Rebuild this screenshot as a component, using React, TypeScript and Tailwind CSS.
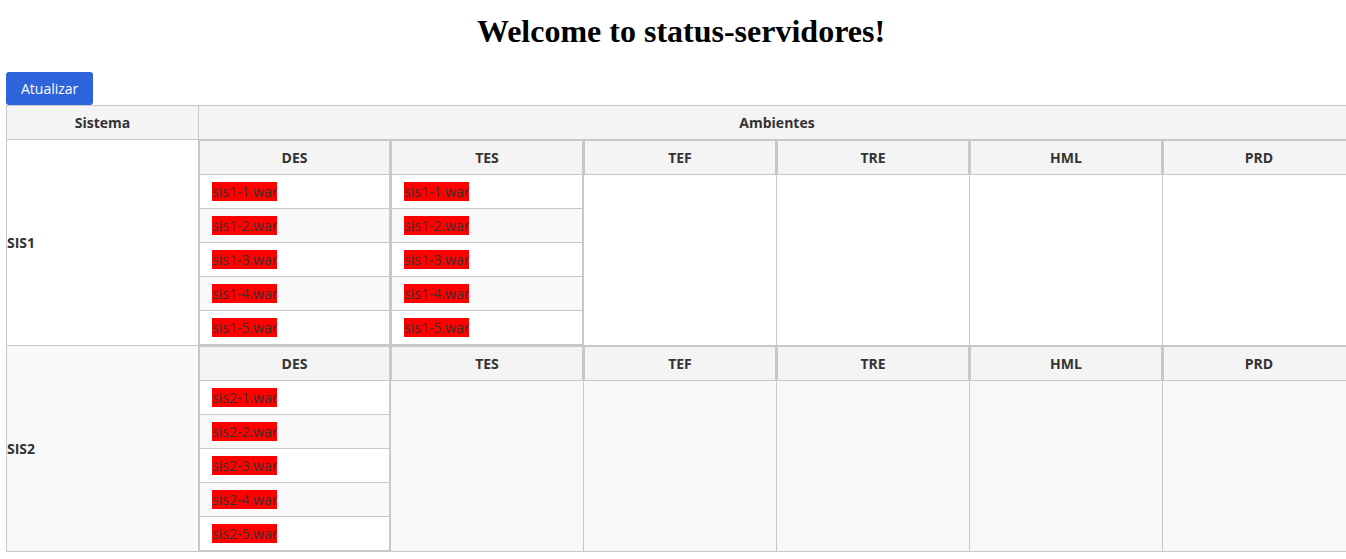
const environments = ["DES", "TES", "TEF", "TRE", "HML", "PRD"];

type System = { name: string; packages: Record<string, string[]> };

const packagesOf = (prefix: string) =>
  [1, 2, 3, 4, 5].map((n) => `${prefix}-${n}.war`);

const systems: System[] = [
  { name: "SIS1", packages: { DES: packagesOf("sis1"), TES: packagesOf("sis1") } },
  { name: "SIS2", packages: { DES: packagesOf("sis2") } },
];

function EnvironmentTable({ name, packages }: { name: string; packages: string[] }) {
  return (
    <table className="w-full border-separate border-spacing-0 border-x border-t border-[#c8c8c8]">
      <thead>
        <tr>
          <th scope="col" className="h-[34px] border-b border-[#c8c8c8] bg-[#f4f4f4] p-0 text-center font-bold">
            {name}
          </th>
        </tr>
      </thead>
      <tbody>
        {packages.map((item) => (
          <tr key={item} className="bg-white even:bg-[#f9f9f9]">
            <td className="h-[34px] border-b border-[#c8c8c8] px-3 py-0">
              <span className="bg-[#ff0000]">{item}</span>
            </td>
          </tr>
        ))}
      </tbody>
    </table>
  );
}

export default function App() {
  return (
    <div className="overflow-hidden bg-white">
      <main className="-mr-2.5 ml-1.5 pb-2 font-['Open_Sans',sans-serif] text-sm leading-5 text-[#333333]">
        <h1 className="pt-[13px] pb-[23px] text-center font-['Liberation_Serif',serif] text-[32px] leading-9 font-bold text-black">
          Welcome to status-servidores!
        </h1>
        <button
          type="button"
          className="block h-[33px] rounded-[3px] bg-[#2d63db] px-[15px] text-sm text-white"
        >
          Atualizar
        </button>
        <table className="w-full table-fixed border-separate border-spacing-0 border-t border-l border-[#c8c8c8]">
          <colgroup>
            <col className="w-[192px]" />
            <col className="w-[192px]" />
            <col span={4} />
            <col />
          </colgroup>
          <thead>
            <tr className="bg-[#f4f4f4]">
              <th scope="col" className="h-[34px] border-r border-b border-[#c8c8c8] p-0 text-center font-bold">
                Sistema
              </th>
              <th
                scope="colgroup"
                colSpan={environments.length}
                className="h-[34px] border-r border-b border-[#c8c8c8] p-0 text-center font-bold"
              >
                Ambientes
              </th>
            </tr>
          </thead>
          <tbody>
            {systems.map((system) => (
              <tr key={system.name} className="bg-white even:bg-[#f9f9f9]">
                <th scope="row" className="border-r border-b border-[#c8c8c8] p-0 text-left align-middle font-bold">
                  {system.name}
                </th>
                {environments.map((environment) => (
                  <td key={environment} className="border-r border-b border-[#c8c8c8] p-0 align-top">
                    <EnvironmentTable name={environment} packages={system.packages[environment] ?? []} />
                  </td>
                ))}
              </tr>
            ))}
          </tbody>
        </table>
      </main>
    </div>
  );
}
